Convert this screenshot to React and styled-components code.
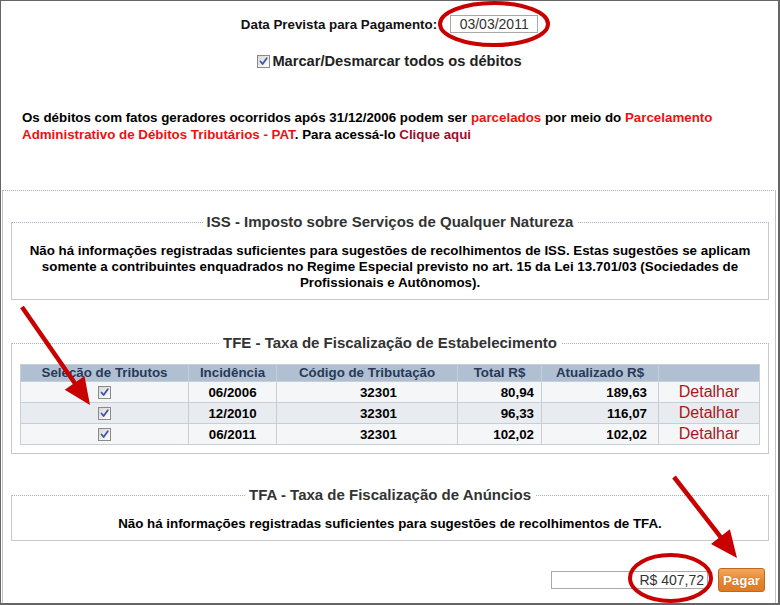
import React from 'react';
import styled, { createGlobalStyle } from 'styled-components';

const Global = createGlobalStyle`
  html, body { margin: 0; padding: 0; background: #fff; }
  body { font-family: "Liberation Sans", Arial, sans-serif; }
`;

const Frame = styled.div`
  position: relative;
  box-sizing: border-box;
  width: 780px;
  height: 605px;
  border-style: solid;
  border-color: #666;
  border-width: 1px 2px 2px 1px;
  display: flex;
  flex-direction: column;
  overflow: hidden;
  font-family: "Liberation Sans", Arial, sans-serif;
`;

const DateRow = styled.div`
  display: flex;
  justify-content: center;
  align-items: center;
  gap: 13px;
  margin-top: 14px;
  height: 18px;
`;

const Label = styled.span`
  font-size: 13.33px;
  font-weight: bold;
  color: #111;
`;

const TextBox = styled.input`
  box-sizing: border-box;
  width: ${p => p.$w}px;
  height: 18px;
  margin: 0;
  border: 1px solid #a9a9a9;
  padding: 0 ${p => (p.$right ? 3 : 0)}px 0 0;
  font-family: "Liberation Sans", Arial, sans-serif;
  font-size: 14px;
  color: #333;
  text-align: ${p => (p.$right ? 'right' : 'center')};
  background: #fff;
  outline: none;
`;

const CheckRow = styled.div`
  display: flex;
  justify-content: center;
  align-items: center;
  gap: 2px;
  margin-top: 19px;
  height: 18px;
`;

const CheckLabel = styled.span`
  font-size: 14.67px;
  font-weight: bold;
  color: #222;
`;

const Box = styled.span`
  box-sizing: border-box;
  display: inline-flex;
  width: 13px;
  height: 13px;
  border: 1px solid #8a8a8a;
  background: linear-gradient(135deg, #d8d8d2 0%, #f4f4f0 70%, #fff 100%);
  align-items: center;
  justify-content: center;
`;

const Notice = styled.p`
  margin: 39px 20px 0 21px;
  font-size: 13.33px;
  font-weight: bold;
  line-height: 17px;
  color: #000;
`;

const Red = styled.span`
  color: ${p => (p.$dark ? '#99102a' : '#ee1111')};
`;

const Panel = styled.div`
  flex: 1;
  margin: 47px 2px 0 1px;
  padding: 22px 6px 0 8px;
  border-top: 1px dotted #9fb4cc;
  border-left: 1px solid #c4c4c4;
  border-right: 1px solid #c4c4c4;
  display: flex;
  flex-direction: column;
`;

const Section = styled.fieldset`
  margin: ${p => p.$gap}px 0 0 0;
  padding: 12px ${p => (p.$table ? 8 : 10)}px 8px;
  min-width: 0;
  border: 1px solid #c8c8c8;
  border-top: 1px dotted #9fb4cc;
`;

const Legend = styled.legend`
  margin: 0 auto;
  padding: 0 4px;
  font-size: 15px;
  font-weight: bold;
  line-height: 18px;
  color: #333;
`;

const Info = styled.p`
  margin: 0;
  text-align: center;
  font-size: 13.33px;
  font-weight: bold;
  line-height: 16px;
  color: #000;
`;

const Table = styled.table`
  width: 740px;
  table-layout: fixed;
  border-collapse: separate;
  border-spacing: 0;
  border-top: 1px solid #c6ced8;
  border-left: 1px solid #c6ced8;
`;

const Th = styled.th`
  box-sizing: border-box;
  width: ${p => p.$w}px;
  padding: 0;
  line-height: 16px;
  background: #b0c0d2;
  color: #283a58;
  font-size: 13.33px;
  font-weight: bold;
  text-align: center;
  border-right: 1px solid #c6ced8;
  border-bottom: 1px solid #c6ced8;
`;

const Tr = styled.tr`
  background: ${p => (p.$alt ? '#e8ebef' : '#f5f6f8')};
`;

const Td = styled.td`
  padding: 0 ${p => p.$pr || 0}px 0 0;
  line-height: 19px;
  height: 19px;
  font-size: 13.33px;
  font-weight: bold;
  color: #000;
  text-align: ${p => p.$align || 'center'};
  vertical-align: middle;
  border-right: 1px solid #c6ced8;
  border-bottom: 1px solid #c6ced8;
`;

const CellCheck = styled.div`
  display: flex;
  justify-content: center;
  align-items: center;
  height: 19px;
`;

const Detail = styled.span`
  font-size: 16px;
  font-weight: normal;
  color: #a81818;
`;

const PayRow = styled.div`
  display: flex;
  justify-content: flex-end;
  align-items: center;
  gap: 10px;
  margin-top: 27px;
  padding-right: 4px;
  height: 24px;
`;

const PayButton = styled.button`
  box-sizing: border-box;
  width: 47px;
  height: 24px;
  margin: 0;
  padding: 0;
  border: 1px solid #c0661c;
  border-radius: 3px;
  background: linear-gradient(#f2a95e, #e6842f 55%, #e07a24);
  color: #fff;
  font-family: "Liberation Sans", Arial, sans-serif;
  font-size: 13.33px;
  font-weight: bold;
  text-shadow: 0 0 1px rgba(120, 50, 0, 0.5);
`;

const Overlay = styled.svg`
  position: absolute;
  top: -1px;
  left: -1px;
  width: 780px;
  height: 605px;
  pointer-events: none;
`;

const Check = () => (
  <Box>
    <svg width="11" height="11" viewBox="0 0 11 11">
      <path d="M2.5 5.5 L4.6 8 L8.8 2.2" fill="none" stroke="#3b55b0" strokeWidth="1.8" strokeLinecap="round" strokeLinejoin="round" />
    </svg>
  </Box>
);

const Arrow = ({ x1, y1, x2, y2 }) => {
  const dx = x2 - x1;
  const dy = y2 - y1;
  const len = Math.hypot(dx, dy);
  const ux = dx / len;
  const uy = dy / len;
  const hl = 27;
  const hw = 12;
  const bx = x2 - ux * hl;
  const by = y2 - uy * hl;
  const px = -uy * hw;
  const py = ux * hw;
  return (
    <g>
      <line x1={x1} y1={y1} x2={bx + ux * 2} y2={by + uy * 2} stroke="#c80000" strokeWidth="4.5" />
      <polygon points={`${x2},${y2} ${bx + px},${by + py} ${bx - px},${by - py}`} fill="#c80000" />
    </g>
  );
};

const rows = [
  { inc: '06/2006', total: '80,94', upd: '189,63' },
  { inc: '12/2010', total: '96,33', upd: '116,07' },
  { inc: '06/2011', total: '102,02', upd: '102,02' },
];

export default function App() {
  return (
    <>
      <Global />
      <Frame>
        <DateRow>
          <Label>Data Prevista para Pagamento:</Label>
          <TextBox $w={88} readOnly value="03/03/2011" />
        </DateRow>
        <CheckRow>
          <Check />
          <CheckLabel>Marcar/Desmarcar todos os débitos</CheckLabel>
        </CheckRow>
        <Notice>
          Os débitos com fatos geradores ocorridos após 31/12/2006 podem ser <Red>parcelados</Red> por meio do{' '}
          <Red>Parcelamento Administrativo de Débitos Tributários - PAT</Red>. Para acessá-lo <Red $dark>Clique aqui</Red>
        </Notice>
        <Panel>
          <Section $gap={0}>
            <Legend>ISS - Imposto sobre Serviços de Qualquer Natureza</Legend>
            <Info>
              Não há informações registradas suficientes para sugestões de recolhimentos de ISS. Estas sugestões se aplicam
              somente a contribuintes enquadrados no Regime Especial previsto no art. 15 da Lei 13.701/03 (Sociedades de
              Profissionais e Autônomos).
            </Info>
          </Section>
          <Section $gap={34} $table>
            <Legend>TFE - Taxa de Fiscalização de Estabelecimento</Legend>
            <Table>
              <thead>
                <tr>
                  <Th $w={168}>Seleção de Tributos</Th>
                  <Th $w={88}>Incidência</Th>
                  <Th $w={181}>Código de Tributação</Th>
                  <Th $w={84}>Total R$</Th>
                  <Th $w={117}>Atualizado R$</Th>
                  <Th $w={101}></Th>
                </tr>
              </thead>
              <tbody>
                {rows.map((r, i) => (
                  <Tr key={r.inc} $alt={i === 1}>
                    <Td>
                      <CellCheck>
                        <Check />
                      </CellCheck>
                    </Td>
                    <Td>{r.inc}</Td>
                    <Td $align="right" $pr={60}>32301</Td>
                    <Td $align="right" $pr={7}>{r.total}</Td>
                    <Td $align="right" $pr={11}>{r.upd}</Td>
                    <Td>
                      <Detail>Detalhar</Detail>
                    </Td>
                  </Tr>
                ))}
              </tbody>
            </Table>
          </Section>
          <Section $gap={32}>
            <Legend>TFA - Taxa de Fiscalização de Anúncios</Legend>
            <Info>Não há informações registradas suficientes para sugestões de recolhimentos de TFA.</Info>
          </Section>
          <PayRow>
            <TextBox $w={157} $right readOnly value="R$ 407,72" />
            <PayButton type="button">Pagar</PayButton>
          </PayRow>
        </Panel>
        <Overlay viewBox="0 0 780 605">
          <ellipse cx="494" cy="24" rx="54" ry="21" fill="none" stroke="#c80000" strokeWidth="4" />
          <ellipse cx="670.5" cy="578" rx="40.5" ry="23" fill="none" stroke="#c80000" strokeWidth="4" />
          <Arrow x1={22} y1={307} x2={90} y2={405} />
          <Arrow x1={674} y1={477} x2={737} y2={558} />
        </Overlay>
      </Frame>
    </>
  );
}
